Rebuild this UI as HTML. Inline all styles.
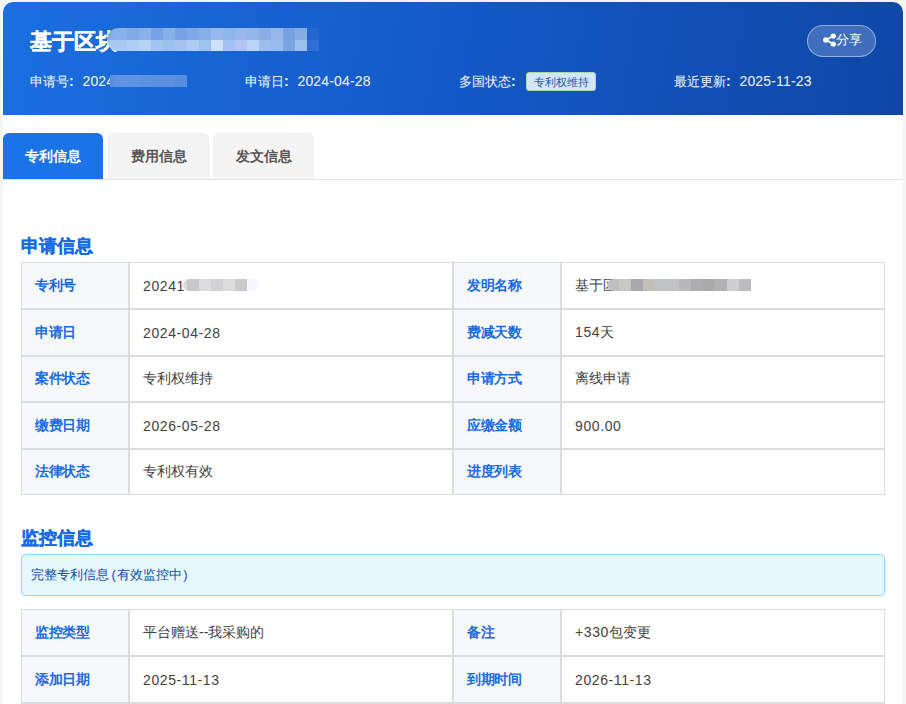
<!DOCTYPE html>
<html><head><meta charset="utf-8">
<style>
*{box-sizing:border-box;margin:0;padding:0}
html,body{width:906px;height:704px;overflow:hidden;background:#f5f5f5;font-family:"Liberation Sans",sans-serif}
.card{position:absolute;left:3px;top:2px;width:900px;height:760px;background:#fff;border-radius:10px 10px 0 0}
.hdr{position:absolute;left:0;top:0;width:900px;height:113px;border-radius:10px 10px 0 0;background:linear-gradient(100deg,#1b6fe0 0%,#1459c8 50%,#0e47a6 100%)}
.title{position:absolute;left:27px;top:25px;font-size:22px;font-weight:bold;color:#fff;line-height:30px;white-space:nowrap;-webkit-text-stroke:.4px #fff}
.mos{position:absolute;overflow:hidden}
.mr{display:flex;height:50%}
.mr i{display:block;height:100%;flex:none}
.meta{position:absolute;top:70px;font-size:13px;font-weight:500;color:rgba(255,255,255,.92);-webkit-text-stroke:.15px rgba(255,255,255,.6);line-height:18px;white-space:nowrap}
.badge{position:absolute;left:523px;top:70px;width:70px;height:19px;font-size:11px;line-height:18px;text-align:center;background:#d3e5f8;color:#1f58b0;border:1px solid #a6dca0;border-radius:3px}
.share{position:absolute;left:804px;top:23px;width:69px;height:32px;border-radius:16px;background:rgba(255,255,255,.2);border:1px solid rgba(255,255,255,.45);color:#fff;font-size:13px;line-height:30px}
.tab{position:absolute;top:131px;height:46px;width:100px;border-radius:6px 6px 0 0;font-size:14px;font-weight:bold;line-height:44px;text-align:center;background:#f4f4f4;color:#575757;border:1px solid #efefef;border-bottom:0}
.tab.on{background:#1a73e8;color:#fff;border-color:#1a73e8}
.tabline{position:absolute;left:0;top:177px;width:900px;height:1px;background:#e2e2e2}
.sec{position:absolute;left:18px;font-size:18px;font-weight:bold;color:#176ae6;line-height:24px;-webkit-text-stroke:.3px #176ae6}
table{position:absolute;left:18px;width:864px;border-collapse:separate;border-spacing:0;table-layout:fixed}
td{border:1px solid #dcdcdc;font-size:14px;color:#424242;padding:0 13px}
td.l{background:#f7f8fa;color:#1a6ae6;font-weight:bold;width:108px;letter-spacing:-.5px}
td.v{width:324px}
td.v2{width:323px}
.n{font-size:14px;letter-spacing:.15px}
.c{display:inline-block;width:13.5px;font-weight:bold;font-size:14px}
.d{letter-spacing:.6px}
.alert{position:absolute;left:18px;top:552px;width:864px;height:42px;background:#e6f7ff;border:1px solid #91d5ff;border-radius:4px;font-size:13px;color:#0f4bb0;line-height:40px;padding-left:9px}
</style></head><body>
<div class="card">
 <div class="hdr">
  <div class="title">基于区块</div>
  <div class="mos" style="left:104px;top:26px;width:212px;height:23px;border-radius:12px 0 0 12px"><div class="mr"><i style="width:8px;background:#86aee9"></i><i style="width:12px;background:#88b0ea"></i><i style="width:12px;background:#80aae8"></i><i style="width:12px;background:#88b2ea"></i><i style="width:12px;background:#77a3e6"></i><i style="width:12px;background:#86b0ea"></i><i style="width:12px;background:#77a2e4"></i><i style="width:12px;background:#7ea8e6"></i><i style="width:12px;background:#88b0e9"></i><i style="width:12px;background:#97b9ec"></i><i style="width:12px;background:#8db6ec"></i><i style="width:12px;background:#9ab7ec"></i><i style="width:12px;background:#90b6ea"></i><i style="width:12px;background:#89aee8"></i><i style="width:12px;background:#96b9ea"></i><i style="width:12px;background:#76a2e2"></i><i style="width:12px;background:#86ace6"></i><i style="width:12px;background:#2466cf"></i></div><div class="mr"><i style="width:8px;background:#aac8f2"></i><i style="width:12px;background:#aac8f2"></i><i style="width:12px;background:#b0cef4"></i><i style="width:12px;background:#b6d3f5"></i><i style="width:12px;background:#a4c4f0"></i><i style="width:12px;background:#9ec0ef"></i><i style="width:12px;background:#a4c3f0"></i><i style="width:12px;background:#aecbf2"></i><i style="width:12px;background:#9cc2ee"></i><i style="width:12px;background:#d0def7"></i><i style="width:12px;background:#a4c1f0"></i><i style="width:12px;background:#b4c3f1"></i><i style="width:12px;background:#b9d6f4"></i><i style="width:12px;background:#9ebfee"></i><i style="width:12px;background:#97bdee"></i><i style="width:12px;background:#7aa5e4"></i><i style="width:12px;background:#9dbfee"></i><i style="width:12px;background:#2e6dd3"></i></div></div>
  <div class="meta" style="left:27px">申请号<span class="c">:</span><span class="n">2024</span></div>
  <div class="mos" style="left:107px;top:73px;width:77px;height:12px"><div class="mr" style="height:100%"><i style="width:5px;background:#5a8fe1"></i><i style="width:12px;background:#5e93e3"></i><i style="width:12px;background:#5f94e3"></i><i style="width:12px;background:#5c92e2"></i><i style="width:12px;background:#5a90e1"></i><i style="width:12px;background:#5b90e0"></i><i style="width:12px;background:#588cdf"></i></div></div>
  <div class="meta" style="left:242px">申请日<span class="c">:</span><span class="n">2024-04-28</span></div>
  <div class="meta" style="left:456px">多国状态<span class="c">:</span></div>
  <div class="badge">专利权维持</div>
  <div class="meta" style="left:671px">最近更新<span class="c">:</span><span class="n">2025-11-23</span></div>
  <div class="share"><svg width="14" height="14" viewBox="0 0 14 14" style="position:absolute;left:15px;top:7px"><path d="M3 7 L10.3 3 M3 7 L10.3 11" stroke="#fff" stroke-width="1.5" fill="none"/><circle cx="2.9" cy="7" r="2.8" fill="#fff"/><circle cx="10.3" cy="3" r="2.6" fill="#fff"/><circle cx="10.3" cy="11" r="2.6" fill="#fff"/></svg><span style="position:absolute;left:27.5px;top:-1px">分享</span></div>
 </div>
 <div class="tab on" style="left:0">专利信息</div>
 <div class="tab" style="left:105px;width:101px">费用信息</div>
 <div class="tab" style="left:210px;width:101px">发文信息</div>
 <div class="tabline"></div>

 <div class="sec" style="top:232px">申请信息</div>
 <table style="top:260px"><colgroup><col style="width:108px"><col style="width:324px"><col style="width:108px"><col style="width:324px"></colgroup>
  <tr style="height:47px"><td class="l">专利号</td><td class="v"><span class="d">20241</span></td><td class="l">发明名称</td><td class="v">基于区</td></tr>
  <tr style="height:47px"><td class="l">申请日</td><td class="v"><span class="d">2024-04-28</span></td><td class="l">费减天数</td><td class="v"><span class="d">154</span>天</td></tr>
  <tr style="height:46px"><td class="l">案件状态</td><td class="v">专利权维持</td><td class="l">申请方式</td><td class="v">离线申请</td></tr>
  <tr style="height:47px"><td class="l">缴费日期</td><td class="v"><span class="d">2026-05-28</span></td><td class="l">应缴金额</td><td class="v"><span class="d">900.00</span></td></tr>
  <tr style="height:46px"><td class="l">法律状态</td><td class="v">专利权有效</td><td class="l">进度列表</td><td class="v"></td></tr>
 </table>

 <div class="mos" style="left:180px;top:277px;width:76px;height:12px;border-radius:6px 6px 6px 6px"><div class="mr" style="height:100%"><i style="width:4px;background:#dcdcdc"></i><i style="width:12px;background:#c8c8ca"></i><i style="width:12px;background:#dcdcdc"></i><i style="width:12px;background:#d2d2d4"></i><i style="width:12px;background:#dcdcdc"></i><i style="width:12px;background:#cbc9c9"></i><i style="width:12px;background:#f4f8fd"></i></div></div>
 <div class="mos" style="left:604px;top:277px;width:144px;height:12px;border-radius:6px 0 0 6px"><div class="mr" style="height:100%"><i style="width:12px;background:#bebfc1"></i><i style="width:12px;background:#c8c8c5"></i><i style="width:12px;background:#a6a8ae"></i><i style="width:12px;background:#c2bfbb"></i><i style="width:12px;background:#c2c3c5"></i><i style="width:12px;background:#c2c3c5"></i><i style="width:12px;background:#b9b8ba"></i><i style="width:12px;background:#aeadb0"></i><i style="width:12px;background:#abaaab"></i><i style="width:12px;background:#b0b2b5"></i><i style="width:12px;background:#cfcfcf"></i><i style="width:12px;background:#bdbdbf"></i></div></div>
 <div class="sec" style="top:524px">监控信息</div>
 <div class="alert">完整专利信息<span style="margin:0 1px 0 2.5px">(</span>有效监控中<span style="margin-left:1.5px">)</span></div>
 <table style="top:607px"><colgroup><col style="width:108px"><col style="width:324px"><col style="width:108px"><col style="width:324px"></colgroup>
  <tr style="height:47px"><td class="l">监控类型</td><td class="v">平台赠送--我采购的</td><td class="l">备注</td><td class="v"><span class="d">+330</span>包变更</td></tr>
  <tr style="height:47px"><td class="l">添加日期</td><td class="v"><span class="d">2025-11-13</span></td><td class="l">到期时间</td><td class="v"><span class="d">2026-11-13</span></td></tr>
  <tr style="height:47px"><td class="l">&nbsp;</td><td class="v"></td><td class="l"></td><td class="v"></td></tr>
 </table>
</div>
</body></html>
